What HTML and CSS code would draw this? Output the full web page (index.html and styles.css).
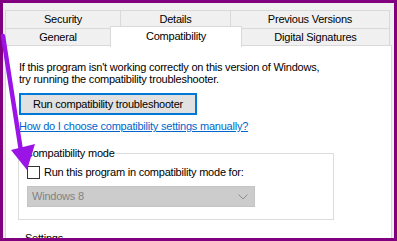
FILE: index.html
```html
<!DOCTYPE html>
<html>
<head>
<meta charset="utf-8">
<link rel="stylesheet" href="styles.css">
</head>
<body>
<div class="frame">
  <div class="tabs">
    <div class="tabrow">
      <div class="tab t-sec">Security</div>
      <div class="tab t-det">Details</div>
      <div class="tab t-prev">Previous Versions</div>
    </div>
    <div class="tabrow front">
      <div class="tab t-gen">General</div>
      <div class="tab sel t-comp">Compatibility</div>
      <div class="tab t-dig">Digital Signatures</div>
    </div>
  </div>
  <div class="panel">
    <p class="intro">If this program isn't working correctly on this version of Windows,<br>try running the compatibility troubleshooter.</p>
    <div class="btn">Run compatibility troubleshooter</div>
    <a class="link" href="#">How do I choose compatibility settings manually?</a>
    <fieldset class="group">
      <legend>Compatibility mode</legend>
      <div class="check-row">
        <span class="checkbox"></span>
        <span>Run this program in compatibility mode for:</span>
      </div>
      <div class="select">
        <span>Windows 8</span>
        <svg class="chev" width="10" height="6" viewBox="0 0 10 6"><path d="M0.5 0.5 L5 5 L9.5 0.5" fill="none" stroke="#8c8c8c" stroke-width="1"/></svg>
      </div>
    </fieldset>
    <fieldset class="group settings">
      <legend>Settings</legend>
      <div class="check-row"><span>&nbsp;</span></div>
    </fieldset>
  </div>
</div>
<svg class="arrow" width="397" height="241" viewBox="0 0 397 241">
  <line x1="3" y1="36" x2="21" y2="151" stroke="#9b14e6" stroke-width="4.5" stroke-linecap="round"/>
  <polygon points="11,150 35,144 27,170" fill="#9b14e6"/>
</svg>
</body>
</html>
```
FILE: styles.css
```css
html, body {
  margin: 0;
  padding: 0;
}
body {
  position: relative;
  width: 397px;
  height: 241px;
  overflow: hidden;
  font-family: "Liberation Sans", Arial, sans-serif;
  font-size: 11px;
  letter-spacing: -0.22px;
  color: #000;
}
.frame {
  box-sizing: border-box;
  width: 397px;
  height: 241px;
  border: 3px solid #800080;
  background: #f0f0f0;
  padding: 7px 0 0 2px;
  overflow: hidden;
}
.tabs {
  display: flex;
  flex-direction: column;
}
.tabrow {
  display: flex;
  height: 19px;
}
.tabrow.front {
  margin-top: -1px;
  height: 18px;
  align-items: flex-start;
}
.tab {
  box-sizing: border-box;
  height: 19px;
  border: 1px solid #d9d9d9;
  background: #f0f0f0;
  margin-right: -1px;
  display: flex;
  align-items: center;
  justify-content: center;
  line-height: 13px;
}
.front .tab {
  height: 18px;
  padding-top: 1px;
}
.t-sec { width: 116px; }
.t-det { width: 111px; }
.t-prev { width: 160px; }
.t-gen { width: 106px; }
.t-comp { width: 132px; }
.t-dig { width: 149px; }
.front .tab.sel {
  position: relative;
  z-index: 2;
  background: #fff;
  height: 21px;
  margin-top: -2px;
  border-bottom: none;
  padding-top: 0;
  padding-bottom: 1px;
}
.panel {
  box-sizing: border-box;
  width: 387px;
  height: 220px;
  margin-top: -1px;
  background: #fff;
  border: 1px solid #d9d9d9;
  padding: 15px 0 0 13px;
}
.intro {
  margin: 0;
  line-height: 12px;
}
.btn {
  box-sizing: border-box;
  width: 178px;
  height: 22px;
  margin-top: 8px;
  background: #e1e1e1;
  border: 2px solid #0078d7;
  display: flex;
  align-items: center;
  justify-content: center;
  line-height: 13px;
}
.link {
  display: block;
  width: max-content;
  margin-top: 5px;
  line-height: 13px;
  color: #0066cc;
  text-decoration: underline;
}
.group {
  box-sizing: border-box;
  width: 316px;
  margin: 14px 0 0 -1px;
  padding: 6px 8px 12px 8px;
  border: 1px solid #dcdcdc;
  min-width: 0;
}
.group legend {
  padding: 0 1px;
  margin-left: -3px;
  line-height: 13px;
}
.check-row {
  display: flex;
  align-items: center;
  gap: 4px;
  line-height: 13px;
}
.checkbox {
  box-sizing: border-box;
  width: 13px;
  height: 13px;
  border: 1px solid #333;
  background: #fff;
  flex: none;
}
.select {
  box-sizing: border-box;
  width: 228px;
  height: 21px;
  margin-top: 7px;
  background: #cccccc;
  border: 1px solid #c4c4c4;
  color: #838383;
  display: flex;
  align-items: center;
  justify-content: space-between;
  padding: 0 6px 0 4px;
  line-height: 13px;
}
.chev {
  display: block;
}
.settings {
  margin-top: 12px;
}
.arrow {
  position: absolute;
  left: 0;
  top: 0;
  pointer-events: none;
}
```
